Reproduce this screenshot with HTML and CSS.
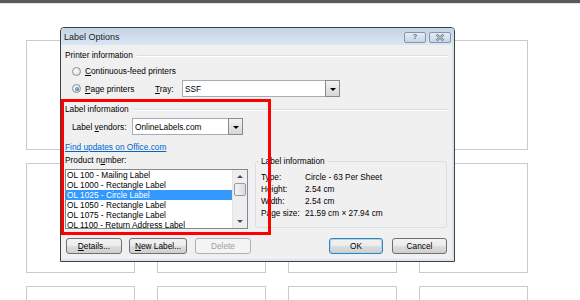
FILE: index.html
```html
<!DOCTYPE html>
<html>
<head>
<meta charset="utf-8">
<link rel="stylesheet" href="styles.css">
</head>
<body>
<div class="topbar"></div>
<div class="sheet">
  <div class="lbl"></div><div class="lbl"></div><div class="lbl"></div><div class="lbl"></div>
  <div class="lbl"></div><div class="lbl"></div><div class="lbl"></div><div class="lbl"></div>
  <div class="lbl"></div><div class="lbl"></div><div class="lbl"></div><div class="lbl"></div>
</div>

<div class="dialog">
  <div class="titlebar">
    <span class="title">Label Options</span>
    <div class="tbtns">
      <div class="tbtn">?</div>
      <div class="tbtn"><svg width="10" height="7" viewBox="0 0 10 7"><path d="M1.5 0.5 L8.5 6.5 M8.5 0.5 L1.5 6.5" stroke="#5d6f86" stroke-width="2.2" fill="none"/><path d="M1.5 0.5 L8.5 6.5 M8.5 0.5 L1.5 6.5" stroke="#f4f7fa" stroke-width="0.8" fill="none"/></svg></div>
    </div>
  </div>
  <div class="body">
    <div class="sechead"><span>Printer information</span><i class="rule"></i></div>
    <div class="radiorow r1"><span class="radio"></span><span><u>C</u>ontinuous-feed printers</span></div>
    <div class="radiorow r2">
      <div class="radiolabel"><span class="radio on"></span><span><u>P</u>age printers</span></div>
      <span class="traylbl"><u>T</u>ray:</span>
      <div class="combo tray"><span class="val">SSF</span><span class="drop"><i class="arrow"></i></span></div>
    </div>
    <div class="sechead s2"><span>Label information</span><i class="rule"></i></div>
    <div class="vendrow">
      <span class="vendlbl">Label <u>v</u>endors:</span>
      <div class="combo vend"><span class="val">OnlineLabels.com</span><span class="drop"><i class="arrow"></i></span></div>
    </div>
    <a class="link">Find updates on Office.com</a>
    <div class="cols">
      <div class="leftcol">
        <div class="plbl">Product n<u>u</u>mber:</div>
        <div class="listbox">
          <div class="items">
            <div class="item">OL 100 - Mailing Label</div>
            <div class="item">OL 1000 - Rectangle Label</div>
            <div class="item sel">OL 1025 - Circle Label</div>
            <div class="item">OL 1050 - Rectangle Label</div>
            <div class="item">OL 1075 - Rectangle Label</div>
            <div class="item">OL 1100 - Return Address Label</div>
          </div>
          <div class="vscroll">
            <i class="up"></i>
            <i class="thumb"></i>
            <i class="down"></i>
          </div>
        </div>
      </div>
      <div class="group">
        <span class="legend">Label information</span>
        <div class="info"><span class="k">Type:</span><span>Circle - 63 Per Sheet</span></div>
        <div class="info"><span class="k">Height:</span><span>2.54 cm</span></div>
        <div class="info"><span class="k">Width:</span><span>2.54 cm</span></div>
        <div class="info"><span class="k">Page size:</span><span>21.59 cm × 27.94 cm</span></div>
      </div>
    </div>
    <div class="buttons">
      <div class="btn details"><u>D</u>etails...</div>
      <div class="btn newlbl"><u>N</u>ew Label...</div>
      <div class="btn del disabled">Delete</div>
      <div class="spacer"></div>
      <div class="btn ok">OK</div>
      <div class="btn cancel">Cancel</div>
    </div>
  </div>
  <div class="redbox"></div>
</div>
</body>
</html>
```
FILE: styles.css
```css
* { box-sizing: border-box; margin: 0; padding: 0; }
body {
  margin: 0;
  width: 580px;
  height: 300px;
  overflow: hidden;
  position: relative;
  background: #fff;
  font-family: "Liberation Sans", Arial, sans-serif;
  font-size: 8.3px;
  color: #000;
}
u { text-decoration: underline; }

.topbar {
  height: 4px;
  background: #5a5a5a;
  border-bottom: 1px solid #dde6ee;
}
.sheet {
  display: grid;
  grid-template-columns: repeat(4, 109px);
  grid-auto-rows: 110px;
  column-gap: 22px;
  row-gap: 13px;
  padding: 36px 0 0 26px;
  height: 296px;
  overflow: hidden;
}
.lbl { border: 1px solid #cbcbcb; }

/* dialog */
.dialog {
  position: absolute;
  left: 60px;
  top: 27px;
  width: 395px;
  height: 235px;
  border: 1px solid #404040;
  border-radius: 4px 4px 0 0;
  background: #f0f0f0;
  display: flex;
  flex-direction: column;
  box-shadow: inset -2px -2px 0 #dbe5ef;
}
.titlebar {
  height: 17px;
  flex: none;
  background: linear-gradient(#c3d4e7, #dae6f2);
  border-radius: 3px 3px 0 0;
  display: flex;
  align-items: center;
  justify-content: space-between;
  padding: 0 3px 0 3px;
}
.title { font-size: 9px; color: #1c1c1c; }
.tbtns { display: flex; gap: 3px; margin-top: 1px; }
.tbtn {
  width: 22px;
  height: 11px;
  border: 1px solid #8396ad;
  border-radius: 2px;
  background: linear-gradient(#e6eef6, #c6d4e4);
  display: flex;
  align-items: center;
  justify-content: center;
  font-size: 8px;
  font-weight: bold;
  color: #5d6f86;
  line-height: 1;
}

.body {
  flex: 1;
  display: flex;
  flex-direction: column;
  padding: 5px 6px 0 4px;
}
.sechead {
  height: 10px;
  display: flex;
  align-items: center;
  gap: 4px;
  white-space: nowrap;
}
.sechead .rule {
  flex: 1;
  height: 2px;
  border-top: 1px solid #d5dfe5;
  border-bottom: 1px solid #fff;
  margin-top: 1px;
}
.sechead.s2 { margin-top: 7px; }

.radiorow {
  display: flex;
  align-items: center;
  padding-left: 7px;
}
.radiorow.r1 { margin-top: 6px; height: 10px; gap: 4px; }
.radiorow.r2 { margin-top: 4px; height: 17px; }
.radiolabel { width: 83px; display: flex; align-items: center; gap: 4px; }
.radio {
  width: 9px;
  height: 9px;
  border-radius: 50%;
  border: 1px solid #8e8f8f;
  background: radial-gradient(circle at 40% 40%, #ffffff, #d4d4d4);
  flex: none;
  position: relative;
}
.radio.on::after {
  content: "";
  position: absolute;
  left: 1.5px;
  top: 1.5px;
  width: 4px;
  height: 4px;
  border-radius: 50%;
  background: radial-gradient(circle at 40% 40%, #8fc2ee, #1f5a9a);
}
.traylbl { width: 27px; }

.combo {
  height: 17px;
  border: 1px solid #a5acb5;
  border-right: none;
  background: #fff;
  display: flex;
  align-items: center;
  justify-content: space-between;
}
.combo .val { padding-left: 2px; }
.combo.tray { width: 158px; }
.combo.vend { width: 111px; }
.drop {
  width: 15px;
  height: 17px;
  border: 1px solid #8a8a8a;
  background: linear-gradient(#f4f4f4, #d6d6d6);
  display: flex;
  flex-direction: column;
  align-items: center;
  justify-content: center;
}
.arrow {
  width: 0;
  height: 0;
  border-left: 3px solid transparent;
  border-right: 3px solid transparent;
  border-top: 3px solid #000;
  margin-top: 1px;
}

.vendrow {
  margin-top: 4px;
  display: flex;
  align-items: center;
  padding-left: 7px;
  height: 17px;
}
.vendlbl { width: 60px; }

.link {
  margin-top: 7px;
  height: 10px;
  line-height: 10px;
  color: #0066cc;
  text-decoration: underline;
}

.cols { margin-top: 3px; display: flex; }
.leftcol { width: 183px; display: flex; flex-direction: column; }
.plbl { height: 10px; line-height: 10px; }
.listbox {
  margin-top: 4px;
  height: 60px;
  border: 1px solid #828790;
  background: #fff;
  display: flex;
}
.items { flex: 1; }
.item {
  height: 10px;
  line-height: 10px;
  padding-left: 1px;
  white-space: nowrap;
}
.item.sel { background: #3399ff; color: #fff; }
.vscroll {
  width: 15px;
  background: #eeeeee;
  border-left: 1px solid #e3e3e3;
  display: flex;
  flex-direction: column;
  align-items: center;
}
.vscroll .up {
  margin-top: 5px;
  width: 0; height: 0;
  border-left: 3px solid transparent;
  border-right: 3px solid transparent;
  border-bottom: 3px solid #4d4d4d;
}
.vscroll .thumb {
  margin-top: 5px;
  width: 12px;
  height: 13px;
  border: 1px solid #9a9a9a;
  border-radius: 2px;
  background: linear-gradient(90deg, #f4f4f4, #dcdcdc);
}
.vscroll .down {
  margin-top: auto;
  margin-bottom: 5px;
  width: 0; height: 0;
  border-left: 3px solid transparent;
  border-right: 3px solid transparent;
  border-top: 3px solid #4d4d4d;
}

.group {
  margin-left: 7px;
  margin-top: 6px;
  width: 192px;
  height: 67px;
  border: 1px solid #d5dfe5;
  border-radius: 3px;
  padding: 5px 0 0 5px;
}
.legend {
  display: block;
  margin: -11px 0 5px -2px;
  width: max-content;
  padding: 0 2px;
  background: #f0f0f0;
  height: 10px;
  line-height: 10px;
}
.info { height: 12px; line-height: 12px; display: flex; white-space: nowrap; }
.info .k { width: 44px; }

.buttons {
  margin-top: 9px;
  height: 16px;
  display: flex;
}
.spacer { flex: 1; }
.btn {
  height: 16px;
  border: 1px solid #707070;
  border-radius: 3px;
  background: linear-gradient(#f2f2f2 0%, #ebebeb 50%, #dddddd 51%, #cfcfcf 100%);
  display: flex;
  align-items: center;
  justify-content: center;
  white-space: nowrap;
}
.btn.details { width: 56px; margin-left: 1px; }
.btn.newlbl { width: 58px; margin-left: 7px; }
.btn.del { width: 56px; margin-left: 8px; }
.btn.disabled {
  border-color: #adb2b5;
  background: #f4f4f4;
  color: #a0a0a0;
}
.btn.ok {
  width: 54px;
  border-color: #3c7fb1;
  box-shadow: inset 0 0 0 1px #a6daf3;
}
.btn.cancel { width: 55px; margin-left: 9px; margin-right: 1px; }

.redbox {
  position: absolute;
  left: 0;
  top: 71px;
  width: 210px;
  height: 136px;
  border: 3px solid #ff0000;
}
```
